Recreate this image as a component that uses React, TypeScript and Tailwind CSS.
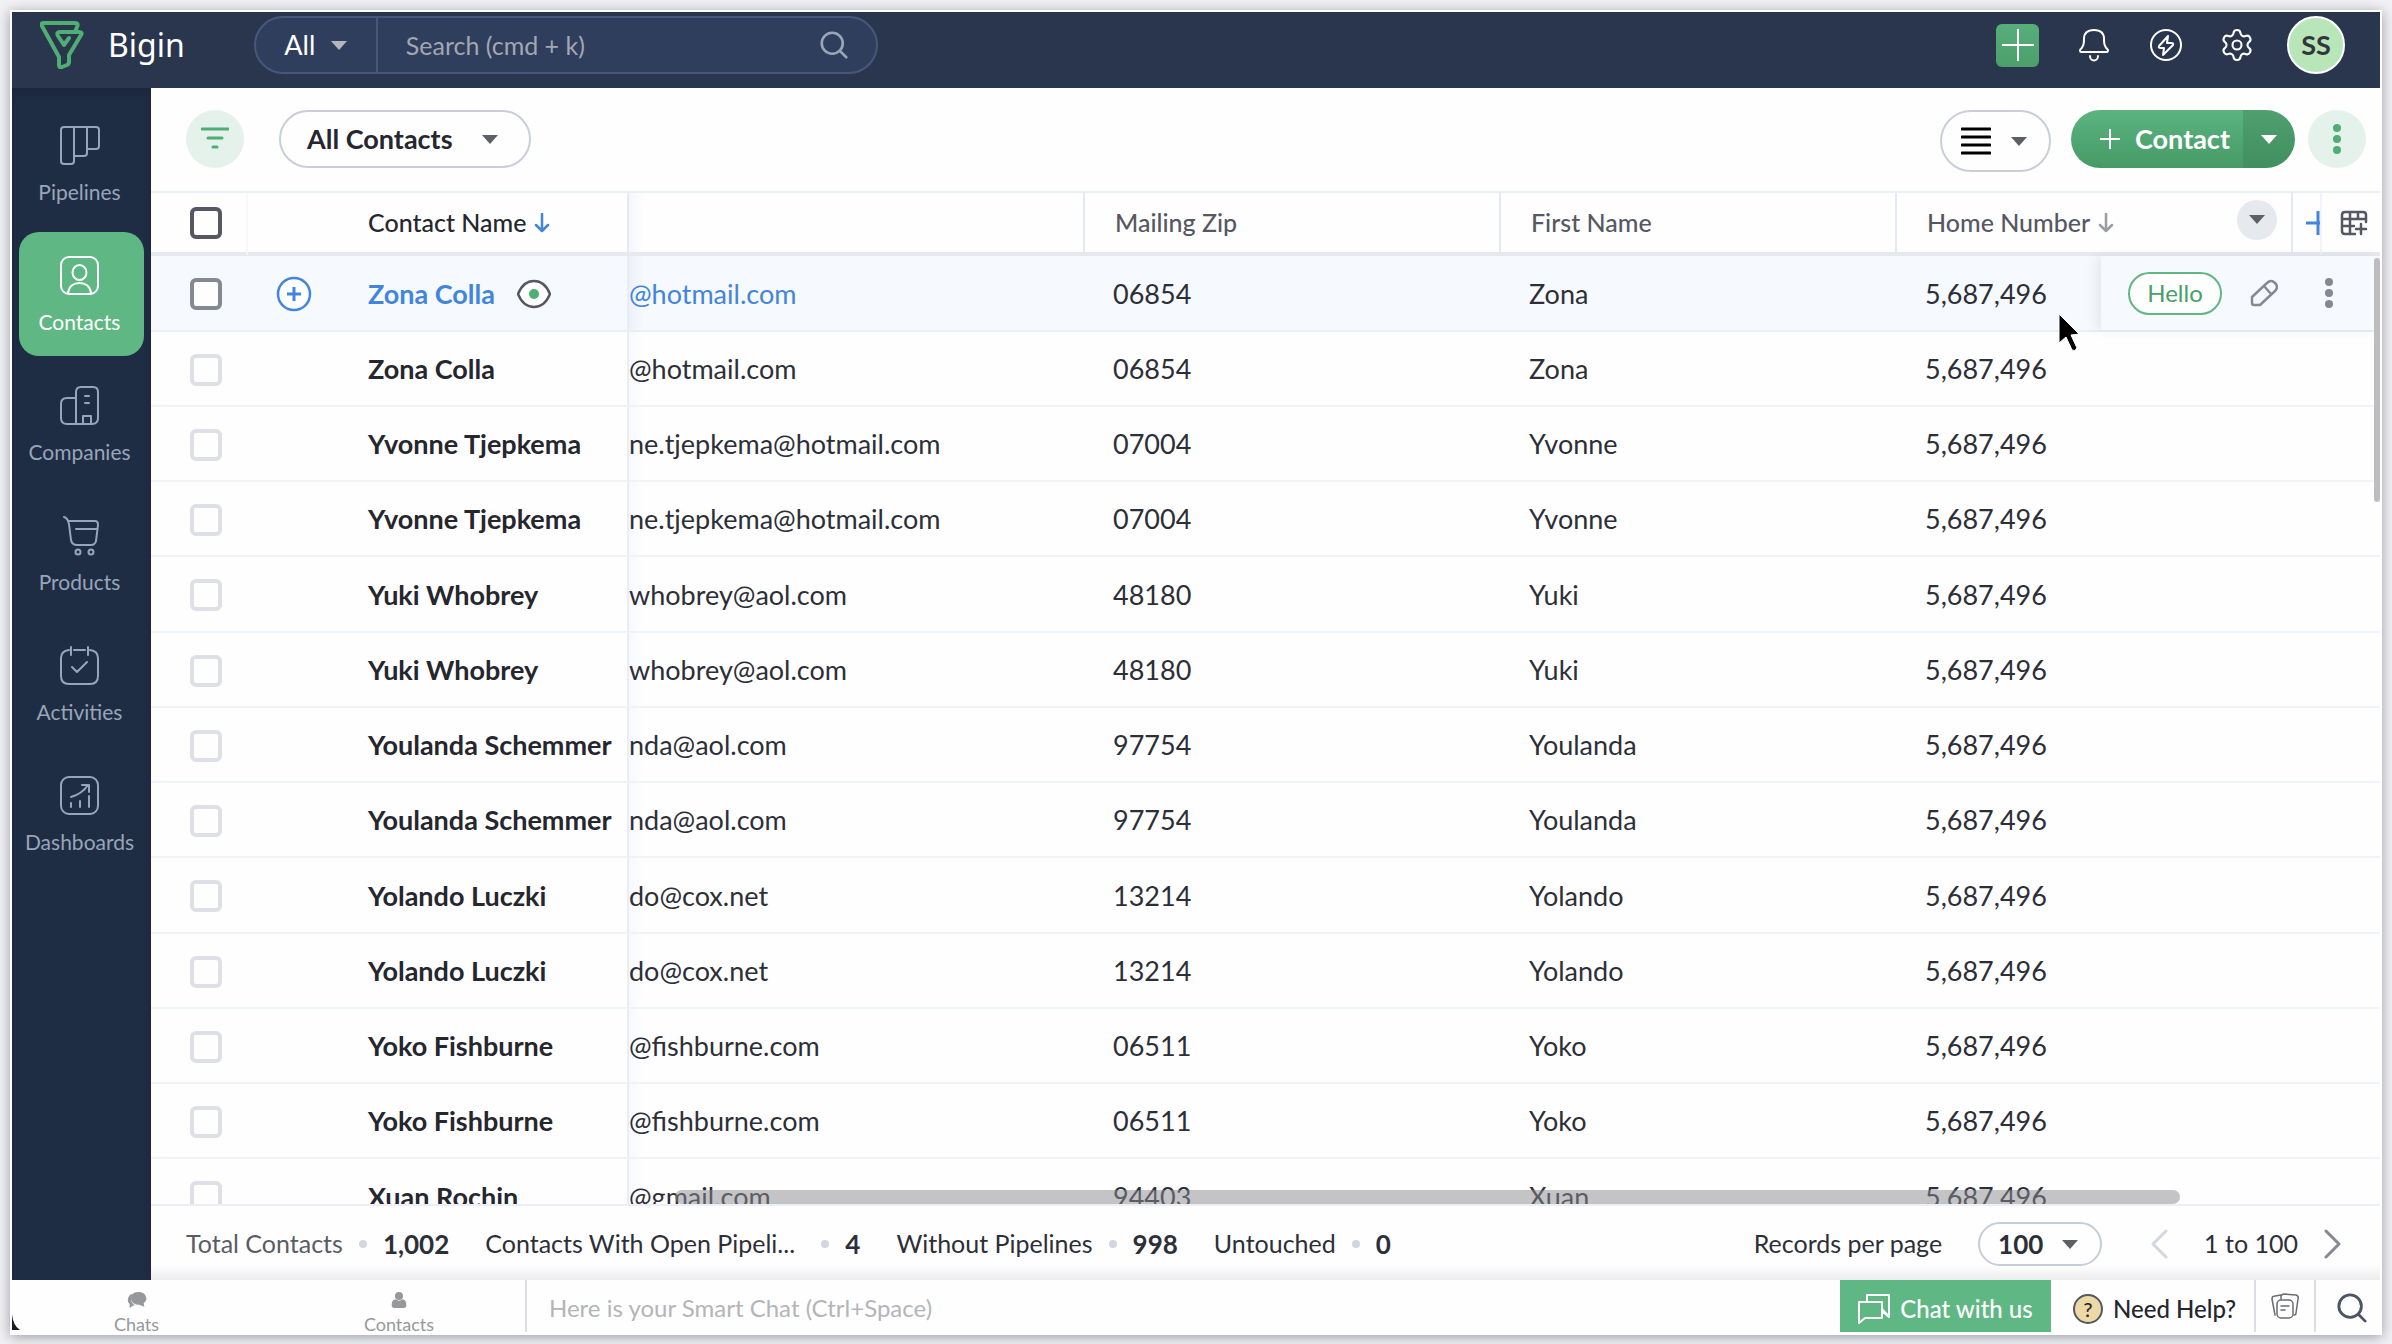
import React from "react";
import { Settings } from "lucide-react";

const NAV_STROKE = { fill: "none", stroke: "currentColor", strokeWidth: 2, strokeLinecap: "round", strokeLinejoin: "round" } as const;

function NavIcon({ name }: { name: string }) {
  return (
    <svg viewBox="0 0 40 40" className="h-10 w-10" aria-hidden="true" {...NAV_STROKE}>
      {name === "Pipelines" && (
        <path d="M4 1H36Q39 1 39 4V20Q39 23 36 23H27M4 1Q1 1 1 4V35Q1 38 4 38H11Q14 38 14 35V1M27 1V27Q27 30 24 30H14" />
      )}
      {name === "Contacts" && (
        <>
          <rect x="1" y="1" width="37" height="37" rx="8" />
          <ellipse cx="19.500" cy="16.500" rx="7" ry="7.500" />
          <path d="M8 37C9 30 14 27 19.500 27S30 30 31 37" />
        </>
      )}
      {name === "Companies" && (
        <path d="M16 12H7Q1 12 1 18V32Q1 38 7 38H32Q38 38 38 32V6Q38 1 33 1H21Q16 1 16 6V38M23 38V30H31V38M25 10H29M25 17H29" />
      )}
      {name === "Products" && (
        <>
          <path d="M4 1C8 2 8 5 9 8L11 24Q12 29 17 29H31Q35 29 36 25L38 9Q38 5 35 5H8M16 13H37" />
          <circle cx="18" cy="36" r="2.500" />
          <circle cx="31" cy="36" r="2.500" />
        </>
      )}
      {name === "Activities" && (
        <path d="M9 4Q1 5 1 12V30Q1 38 9 38H30Q38 38 38 30V12Q38 5 30 4M11 1V9M28 1V9M14 4H25M12 21L17 26L27 16" />
      )}
      {name === "Dashboards" && (
        <>
          <rect x="1" y="1" width="37" height="37" rx="8" />
          <path d="M11 21C18 19 24 15 28 9M22 9H29V16M11 27V31M20 25V31M29 20V31" />
        </>
      )}
    </svg>
  );
}

const NAV = ["Pipelines", "Contacts", "Companies", "Products", "Activities", "Dashboards"];

const PHONE = "5,687,496";
const ROWS = [
  ["Zona Colla", "@hotmail.com", "06854", "Zona"],
  ["Zona Colla", "@hotmail.com", "06854", "Zona"],
  ["Yvonne Tjepkema", "ne.tjepkema@hotmail.com", "07004", "Yvonne"],
  ["Yvonne Tjepkema", "ne.tjepkema@hotmail.com", "07004", "Yvonne"],
  ["Yuki Whobrey", "whobrey@aol.com", "48180", "Yuki"],
  ["Yuki Whobrey", "whobrey@aol.com", "48180", "Yuki"],
  ["Youlanda Schemmer", "nda@aol.com", "97754", "Youlanda"],
  ["Youlanda Schemmer", "nda@aol.com", "97754", "Youlanda"],
  ["Yolando Luczki", "do@cox.net", "13214", "Yolando"],
  ["Yolando Luczki", "do@cox.net", "13214", "Yolando"],
  ["Yoko Fishburne", "@fishburne.com", "06511", "Yoko"],
  ["Yoko Fishburne", "@fishburne.com", "06511", "Yoko"],
  ["Xuan Rochin", "@gmail.com", "94403", "Xuan"],
];

function Caret({ className = "text-[#5f6066]" }: { className?: string }) {
  return (
    <svg viewBox="0 0 16 9" className={`h-[9px] w-4 shrink-0 ${className}`} aria-hidden="true">
      <path d="M0 0H16L8 9Z" fill="currentColor" />
    </svg>
  );
}

function ArrowDown({ className }: { className: string }) {
  return (
    <svg viewBox="0 0 16 20" className={`h-5 w-4 shrink-0 ${className}`} aria-hidden="true">
      <path d="M8 1V18M2 12L8 18L14 12" fill="none" stroke="currentColor" strokeWidth="2.500" strokeLinecap="round" strokeLinejoin="round" />
    </svg>
  );
}

function Dots({ className }: { className: string }) {
  return (
    <svg viewBox="0 0 8 30" className={`h-[30px] w-2 ${className}`} aria-hidden="true">
      <g fill="currentColor">
        <circle cx="4" cy="4" r="4" />
        <circle cx="4" cy="15" r="4" />
        <circle cx="4" cy="26" r="4" />
      </g>
    </svg>
  );
}

function Magnifier({ className }: { className: string }) {
  return (
    <svg viewBox="0 0 32 32" className={className} aria-hidden="true">
      <g fill="none" stroke="currentColor" strokeWidth="3" strokeLinecap="round">
        <circle cx="14" cy="14" r="12" />
        <path d="M23 23L30 30" />
      </g>
    </svg>
  );
}

function TopBar() {
  return (
    <header className="flex h-[76px] shrink-0 items-center bg-[#2a364d] pl-7 pr-[35px] pb-[10px] text-white">
      <a href="#home" className="flex items-center gap-6">
        <svg viewBox="0 0 44 48" className="h-12 w-11" aria-hidden="true">
          <path d="M19 36L2 5Q0 2 4 2H35Q39 2 37 6L35 11M19 36V44Q19 47 22 46L27 44Q29 43 29 41V34L41 14Q43 11 39 11H20Q16 11 18 15L24 24L29 17" fill="none" stroke="#4fae74" strokeWidth="4" strokeLinecap="round" strokeLinejoin="round" />
        </svg>
        <span className="font-['Noto_Sans',sans-serif] text-[32px] leading-10">Bigin</span>
      </a>
      <div className="ml-[69px] flex h-[58px] w-[624px] items-center rounded-full border-2 border-[#46587a] bg-[#303e5d]">
        <button type="button" className="flex h-full w-[122px] items-center justify-center gap-4 border-r-2 border-[#46587a] text-[27px]">
          All <Caret className="text-[#b4b6bb]" />
        </button>
        <input type="search" aria-label="Search" placeholder="Search (cmd + k)" className="h-full min-w-0 flex-1 bg-transparent px-7 text-[25px] text-white outline-none placeholder:text-[#a3a7b1]" />
        <Magnifier className="mr-7 h-7 w-7 text-[#9aa5b8]" />
      </div>
      <div className="ml-auto flex items-center">
        <button type="button" aria-label="Create" className="flex h-[43px] w-[43px] items-center justify-center rounded-md bg-linear-to-b from-[#58ae7b] to-[#4a9f6a]">
          <svg viewBox="0 0 32 32" className="h-8 w-8" aria-hidden="true"><path d="M16 0V32M0 16H32" stroke="#fff" strokeWidth="2" /></svg>
        </button>
        <button type="button" aria-label="Notifications" className="ml-10">
          <svg viewBox="0 0 30 34" className="h-[34px] w-[30px]" {...NAV_STROKE} aria-hidden="true">
            <path d="M2 24C1 24 1 23 1 22C5 18 5 15 5 11C5 5 9 2 15 2S25 5 25 11C25 15 25 18 29 22C29 23 29 24 28 24ZM11 28C11 34 19 34 19 28" />
          </svg>
        </button>
        <button type="button" aria-label="Quick actions" className="ml-10">
          <svg viewBox="0 0 34 34" className="h-[34px] w-[34px]" {...NAV_STROKE} aria-hidden="true">
            <circle cx="17" cy="17" r="15" />
            <path d="M19 8L10 18Q9 20 12 20H15L14 27L24 17Q25 15 22 15H18Z" />
          </svg>
        </button>
        <button type="button" aria-label="Settings" className="ml-9">
          <Settings className="h-9 w-9" strokeWidth={1.4} aria-hidden="true" />
        </button>
        <button type="button" aria-label="Account SS" className="ml-8 h-[58px] w-[58px] rounded-full border-2 border-white bg-[#b8e6b8] text-[27px] font-bold text-[#33373d]">SS</button>
      </div>
    </header>
  );
}

function SideNav() {
  return (
    <nav className="flex w-[139px] shrink-0 flex-col gap-[6px] bg-[#1f2d44] px-[7px] pt-[14px] shadow-[inset_0_6px_6px_rgba(20,30,50,0.4)]">
      {NAV.map((item) => (
        <a
          key={item}
          href={`#${item.toLowerCase()}`}
          className={
            item === "Contacts"
              ? "flex h-[124px] flex-col items-center rounded-[20px] bg-[#5fb883] pt-6 pr-1 text-white"
              : "flex h-[124px] flex-col items-center pt-6 pr-1 text-[#98a5b9]"
          }
        >
          <NavIcon name={item} />
          <span className="mt-[14px] text-[21px] leading-6">{item}</span>
        </a>
      ))}
    </nav>
  );
}

function Toolbar() {
  return (
    <div className="flex h-[103px] shrink-0 items-start pt-[22px] pl-[35px] pr-[14px]">
      <button type="button" aria-label="Filter" className="flex h-[58px] w-[58px] items-center justify-center rounded-full bg-[#e5f2ec]">
        <svg viewBox="0 0 28 24" className="h-6 w-7" aria-hidden="true">
          <path d="M1 2H27M7 11H21M12 20H16" stroke="#4fae74" strokeWidth="3" strokeLinecap="round" />
        </svg>
      </button>
      <button type="button" className="ml-[35px] flex h-[58px] w-[252px] items-center justify-between rounded-full border-2 border-[#c9cedb] pl-[26px] pr-[31px] text-[27px] font-bold text-[#25262e]">
        All Contacts <Caret />
      </button>
      <button type="button" aria-label="View" className="ml-auto flex h-[62px] w-[111px] items-center justify-between rounded-full border-2 border-[#c9cedb] pl-[19px] pr-[22px]">
        <svg viewBox="0 0 30 30" className="h-[30px] w-[30px]" aria-hidden="true">
          <path d="M1 3H29M1 11H29M1 19H29M1 27H29" stroke="#000" strokeWidth="3" strokeLinecap="round" />
        </svg>
        <Caret />
      </button>
      <div className="ml-5 flex h-[58px] overflow-hidden rounded-full text-white">
        <button type="button" className="flex w-[172px] items-center gap-[14px] bg-linear-to-b from-[#5bb480] to-[#469a66] pl-7 text-[27px] font-bold">
          <svg viewBox="0 0 22 22" className="h-[22px] w-[22px]" aria-hidden="true"><path d="M11 1V21M1 11H21" stroke="#fff" strokeWidth="2" /></svg>
          Contact
        </button>
        <button type="button" aria-label="More create options" className="flex w-[52px] items-center justify-center bg-linear-to-b from-[#4f9f6f] to-[#418f5e]">
          <Caret className="text-white" />
        </button>
      </div>
      <button type="button" aria-label="More" className="ml-[13px] flex h-[58px] w-[58px] items-center justify-center rounded-full bg-[#e5f2ec]">
        <Dots className="text-[#4fae74]" />
      </button>
    </div>
  );
}

function CheckBox({ label, tone }: { label: string; tone: "head" | "hover" | "rest" }) {
  const border = tone === "head" ? "border-[#555863]" : tone === "hover" ? "border-[#858993]" : "border-[#dfdfe7]";
  return (
    <input type="checkbox" aria-label={label} className={`block h-8 w-8 appearance-none rounded-md border-4 bg-[#fefefe] ${border}`} />
  );
}

function ContactsTable() {
  return (
    <div className="relative min-h-0 flex-1 overflow-hidden border-y-2 border-[#ebf0f8]">
      <table className="w-full table-fixed border-separate border-spacing-0 text-left text-[27px] text-[#2d2f38]">
        <colgroup>
          <col className="w-[97px]" />
          <col className="w-[381px]" />
          <col className="w-[456px]" />
          <col className="w-[416px]" />
          <col className="w-[396px]" />
          <col className="w-[396px]" />
          <col className="w-[29px]" />
          <col className="w-[58px]" />
        </colgroup>
        <thead>
          <tr className="h-[63px] text-[25px] text-[#555863] [&>th]:border-b-4 [&>th]:border-b-[#e6e9ee] [&>th]:font-medium">
            <th className="border-r-2 border-r-[#f7f8fc] pl-[39px]"><CheckBox label="Select all contacts" tone="head" /></th>
            <th className="border-r-2 border-r-[#e4e9f2] pl-[120px] text-[#25262e]">
              <button type="button" className="flex items-center gap-2">Contact Name <ArrowDown className="text-[#4285dc]" /></button>
            </th>
            <th aria-label="Email" className="border-r-2 border-r-[#e4e9f2] bg-linear-to-r from-[#f4f6fb] to-transparent to-3%" />
            <th className="border-r-2 border-r-[#e4e9f2] pl-[30px]">Mailing Zip</th>
            <th className="border-r-2 border-r-[#e4e9f2] pl-[30px]">First Name</th>
            <th className="border-r-2 border-r-[#e4e9f2] pl-[30px] pr-[14px]">
              <div className="flex items-center justify-between">
                <button type="button" className="flex items-center gap-2">Home Number <ArrowDown className="text-[#9a9da6]" /></button>
                <button type="button" aria-label="Column options" className="mb-[6px] flex h-10 w-10 items-center justify-center rounded-full bg-[#e6e9ee]"><Caret /></button>
              </div>
            </th>
            <th className="border-r-2 border-r-[#f1f4fb]">
              <button type="button" aria-label="Add column" className="ml-auto block">
                <svg viewBox="0 0 14 24" className="h-6 w-[14px]" aria-hidden="true"><path d="M12 0V24M0 12H14" stroke="#4285dc" strokeWidth="3" /></svg>
              </button>
            </th>
            <th className="pl-[18px]">
              <button type="button" aria-label="Manage columns" className="block">
                <svg viewBox="0 0 28 26" className="h-[26px] w-7 text-[#555863]" {...NAV_STROKE} strokeWidth="2.500" aria-hidden="true">
                  <path d="M26 12V5Q26 2 23 2H5Q2 2 2 5V21Q2 24 5 24H15M2 9H26M10 2V24M18 2V9M2 16H14M21 14V24M16 19H26" />
                </svg>
              </button>
            </th>
          </tr>
        </thead>
        <tbody>
          {ROWS.map(([name, email, zip, first], i) => {
            const on = i === 0;
            return (
              <tr key={i} className={on ? "h-[76px] bg-[#f6f9fd] [&>td]:border-b-2 [&>td]:border-b-[#e9edf5] [&>td]:pt-[2px]" : "h-[75px] nth-[4n+1]:h-[76px] [&>td]:border-b-2 [&>td]:border-b-[#eff4fa] [&>td]:pt-[2px]"}>
                <td className="pl-[39px]"><CheckBox label={`Select ${name}`} tone={on ? "hover" : "rest"} /></td>
                <td className="border-r-2 border-r-[#e9edf8]">
                  <div className="flex items-center">
                    <div className="w-[120px] shrink-0 pl-7">
                      {on && (
                        <button type="button" aria-label="Add activity" className="block">
                          <svg viewBox="0 0 36 36" className="h-9 w-9" aria-hidden="true"><circle cx="18" cy="18" r="16" fill="#fff" stroke="#4285dc" strokeWidth="2.500" /><path d="M18 11V25M11 18H25" stroke="#4285dc" strokeWidth="3" /></svg>
                        </button>
                      )}
                    </div>
                    <a href="#contact" className={on ? "font-bold whitespace-nowrap text-[#4285dc]" : "font-bold whitespace-nowrap text-[#25262e]"}>{name}</a>
                    {on && (
                      <button type="button" aria-label="Preview" className="ml-[22px]">
                        <svg viewBox="0 0 34 30" className="h-[30px] w-[34px]" aria-hidden="true"><path d="M1 15C5 5 11 2 17 2S29 5 33 15C29 25 23 28 17 28S5 25 1 15Z" fill="#fff" stroke="#555863" strokeWidth="2.500" /><circle cx="17" cy="15" r="5" fill="#4fae74" /></svg>
                      </button>
                    )}
                  </div>
                </td>
                <td className={on ? "bg-linear-to-r from-[#edf1f7] to-transparent to-3% whitespace-nowrap text-[#4285dc]" : "bg-linear-to-r from-[#f6f8fc] to-transparent to-3% whitespace-nowrap"}>{email}</td>
                <td className="pl-7">{zip}</td>
                <td className="pl-7">{first}</td>
                <td className="pl-7">{PHONE}</td>
                <td colSpan={2} />
              </tr>
            );
          })}
        </tbody>
      </table>

      <div className="absolute top-[63px] right-0 flex h-[74px] w-[279px] items-center bg-[#f6f9fd] pl-[27px] shadow-[-6px_0_10px_rgba(60,70,100,0.08)]">
        <button type="button" className="h-[43px] w-[94px] rounded-full border-2 border-[#5fb883] bg-[#fefefe] text-[24px] leading-8 text-[#4a9f6a]">Hello</button>
        <button type="button" aria-label="Edit" className="ml-7">
          <svg viewBox="0 0 28 28" className="h-7 w-7 text-[#858993]" {...NAV_STROKE} strokeWidth="2.500" aria-hidden="true">
            <path d="M2 18L17 4Q21 0 25 4T25 12L10 26H4Q2 26 2 24ZM14 7L21 15" />
          </svg>
        </button>
        <button type="button" aria-label="More row actions" className="ml-[47px]"><Dots className="text-[#858993]" /></button>
      </div>

      <div className="absolute top-[65px] right-0 h-[244px] w-[6px] rounded-full bg-[#bdbdc0]" />
      <div className="absolute right-[200px] bottom-0 left-[524px] h-[14px] rounded-full bg-[#8a8a8f]/50" />
      <svg viewBox="0 0 24 42" className="absolute top-[119px] right-[299px] h-[42px] w-6" aria-hidden="true">
        <path d="M2 2V31L9 25L15 38Q18 40 20 36L14 23L22 22Z" fill="#000" stroke="#fff" strokeWidth="1" />
      </svg>
    </div>
  );
}

function Stat({ label, value, labelClass = "" }: { label: string; value: string; labelClass?: string }) {
  return (
    <div className="flex items-center">
      <span className={`whitespace-nowrap ${labelClass}`}>{label}</span>
      <span className="mx-4 h-2 w-2 rounded-full bg-[#d0d7e0]" />
      <strong className="text-[26px] font-bold">{value}</strong>
    </div>
  );
}

function Summary() {
  return (
    <div className="flex h-[74px] shrink-0 items-center bg-linear-to-b from-[#fefefe] from-80% to-[#ececee] pt-[2px] pr-[38px] pl-[35px] text-[25px] text-[#2d2f38]">
      <div className="flex items-center gap-9">
        <Stat label="Total Contacts" value="1,002" labelClass="text-[#5a5c66]" />
        <Stat label="Contacts With Open Pipeli..." value="4" labelClass="w-[320px]" />
        <Stat label="Without Pipelines" value="998" />
        <Stat label="Untouched" value="0" />
      </div>
      <div className="ml-auto flex items-center">
        <span>Records per page</span>
        <button type="button" aria-label="Records per page: 100" className="ml-9 flex h-11 w-[124px] items-center justify-between rounded-full border-2 border-[#c5cdd9] pl-[18px] pr-[22px] text-[26px] font-bold">100 <Caret /></button>
        <button type="button" aria-label="Previous page" className="ml-12">
          <svg viewBox="0 0 18 30" className="h-[30px] w-[18px] text-[#d3d6e0]" {...NAV_STROKE} strokeWidth="3" aria-hidden="true"><path d="M16 2L3 15L16 28" /></svg>
        </button>
        <span className="mr-[26px] ml-9">1 to 100</span>
        <button type="button" aria-label="Next page">
          <svg viewBox="0 0 18 30" className="h-[30px] w-[18px] text-[#858993]" {...NAV_STROKE} strokeWidth="3" aria-hidden="true"><path d="M2 2L15 15L2 28" /></svg>
        </button>
      </div>
    </div>
  );
}

function ChatBar() {
  return (
    <footer className="relative flex h-[53px] shrink-0 border-b border-white bg-[#fefefe]">
      <div className="flex w-[515px] shrink-0 border-r-2 border-[#dcdee5] text-[18px] leading-4 text-[#97989b]">
        <button type="button" className="flex w-[250px] flex-col items-center justify-start gap-2 pt-3">
          <svg viewBox="0 0 28 24" className="h-6 w-7" aria-hidden="true">
            <path d="M5 3C-2 9 0 16 3 18L3 24L9 20L15 21C5 19 3 10 7 4Z" fill="currentColor" />
            <path d="M16 0C8 0 5 5 5 10S10 19 17 19L25 22L24 17C27 14 28 12 28 10C28 4 23 0 16 0Z" fill="currentColor" />
          </svg>
          Chats
        </button>
        <button type="button" className="ml-3 flex w-[253px] flex-col items-center justify-start gap-2 pt-3">
          <svg viewBox="0 0 24 24" className="h-6 w-6" aria-hidden="true">
            <circle cx="12" cy="6" r="6" fill="currentColor" />
            <path d="M1 20Q1 11 7 11Q12 15 17 11Q23 11 23 20Q23 24 19 24H5Q1 24 1 20Z" fill="currentColor" />
          </svg>
          Contacts
        </button>
      </div>
      <input type="text" aria-label="Smart Chat" placeholder="Here is your Smart Chat (Ctrl+Space)" className="min-w-0 flex-1 bg-transparent px-[22px] pt-1 text-[24px] outline-none placeholder:text-[#b3b5b8]" />
      <button type="button" className="flex w-[211px] items-center justify-center gap-[10px] bg-[#5fb883] pt-[6px] text-[24px] font-medium text-white">
        <svg viewBox="0 0 32 30" className="h-[30px] w-8" {...NAV_STROKE} aria-hidden="true">
          <path d="M9 7V1H31V23L25 18M1 8H24V24H7L1 29ZM24 15L31 23" />
        </svg>
        Chat with us
      </button>
      <button type="button" className="flex w-[205px] items-center justify-center gap-[10px] border-r-2 border-[#dcdee5] pt-[6px] pl-1 text-[24px] font-medium whitespace-nowrap text-[#25262e]">
        <span className="flex h-[30px] w-[30px] items-center justify-center rounded-full border-2 border-[#555863] bg-[#ecd9a5] text-[20px]">?</span>
        Need Help?
      </button>
      <button type="button" aria-label="Notes" className="flex w-[60px] items-center justify-center border-r-2 border-[#dcdee5]">
        <svg viewBox="0 0 28 26" className="h-[26px] w-7 text-[#6a6c74]" {...NAV_STROKE} strokeWidth="1.500" aria-hidden="true">
          <rect x="6" y="7" width="16" height="18" rx="4" />
          <path d="M10 13H18M10 17H14M4 22L1 6Q1 3 4 3L10 2M10 6L10 3Q11 1 13 1L25 2Q28 3 27 6L25 20Q25 22 23 22" />
        </svg>
      </button>
      <button type="button" aria-label="Search everywhere" className="flex w-[64px] items-center justify-center pt-1 pl-2">
        <Magnifier className="h-[30px] w-[30px] text-[#4b5567]" />
      </button>
      <svg viewBox="0 0 10 20" className="absolute bottom-0 left-0 h-5 w-[8px]" aria-hidden="true"><path d="M0 0Q1 14 10 20H0Z" fill="#1b1b1d" /></svg>
    </footer>
  );
}

export default function App() {
  return (
    <div className="h-screen overflow-hidden bg-[#f2f2f4] px-[10px] pt-[10px] pb-[9px] font-[Lato,sans-serif]">
      <div className="flex h-full flex-col overflow-hidden border-2 border-white bg-[#fefefe] shadow-[0_2px_12px_rgba(20,20,50,0.4)]">
        <TopBar />
        <div className="flex min-h-0 flex-1">
          <SideNav />
          <main className="flex min-w-0 flex-1 flex-col">
            <Toolbar />
            <ContactsTable />
            <Summary />
          </main>
        </div>
        <ChatBar />
      </div>
    </div>
  );
}
